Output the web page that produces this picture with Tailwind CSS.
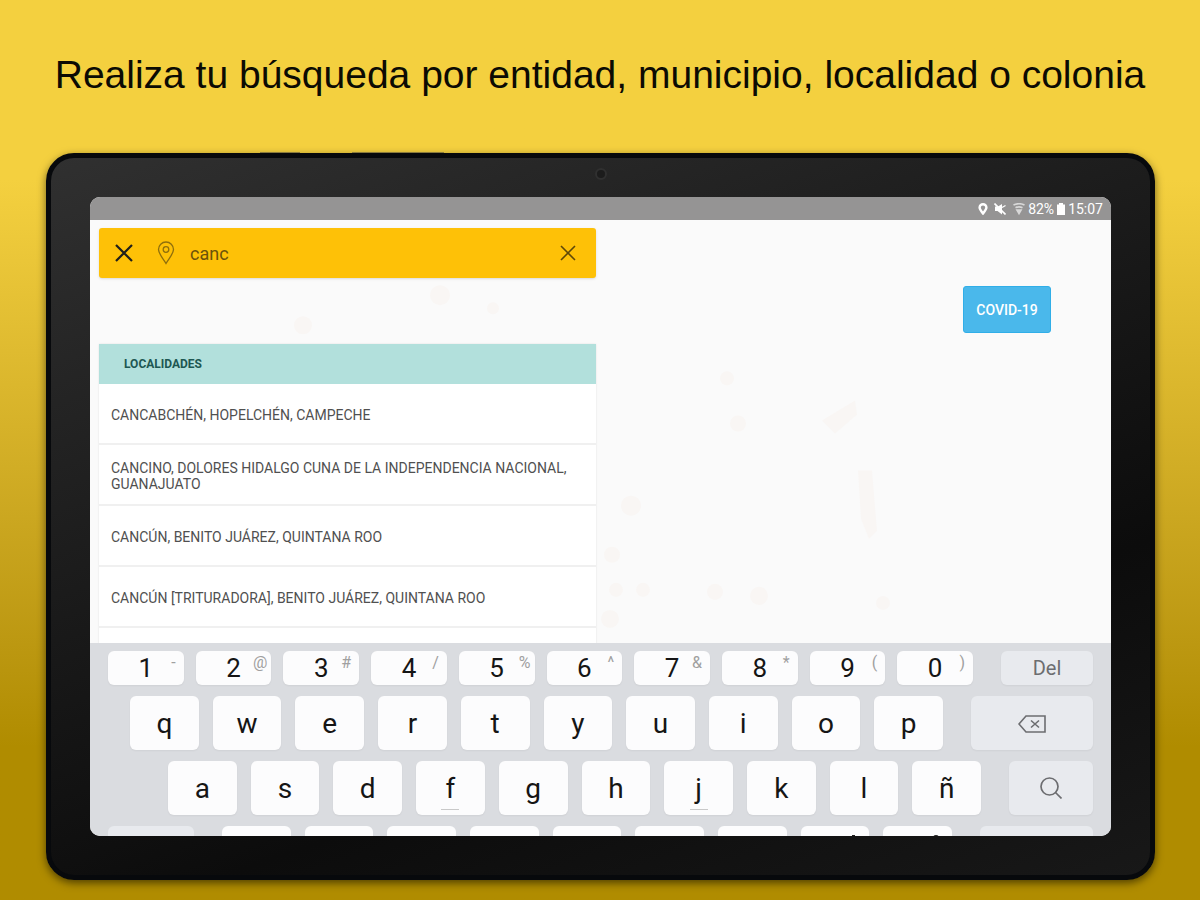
<!DOCTYPE html>
<html lang="es">
<head>
<meta charset="utf-8">
<meta name="viewport" content="width=device-width, initial-scale=1">
<title>Búsqueda</title>
<script src="https://cdn.jsdelivr.net/npm/@tailwindcss/browser@4"></script>
</head>
<body class="font-[Roboto,sans-serif]">
<main class="min-h-screen overflow-hidden bg-linear-to-b from-[#f4d03f] from-20% to-[#b08c00] to-83% px-[46px] pb-5">
  <h1 class="flex h-[153px] items-center justify-center pb-[2px] font-['Liberation_Sans',sans-serif] text-[39px] whitespace-nowrap text-[#0c0b03]">Realiza tu búsqueda por entidad, municipio, localidad o colonia</h1>

  <div class="relative mr-[-1px] rounded-[28px] border-[5px] border-[#07090c] bg-linear-160 from-[#303030] via-[#0c0c0c] via-70% to-[#181818] p-[39px] shadow-[0_3px_8px_rgba(0,0,0,0.55)]">
    <div class="absolute -top-[6px] left-[19%] h-px w-10 bg-[#8a7a3c]"></div>
    <div class="absolute -top-[6px] left-[27.400%] h-px w-[92px] bg-[#8a7a3c]"></div>
    <div class="absolute inset-x-0 top-[10px] mx-auto size-3 rounded-full border-2 border-[#303030] bg-[#1c1c1c]"></div>

    <div class="overflow-hidden rounded-[10px] bg-white">
      <header class="flex h-[23px] items-center justify-end gap-[3px] bg-[#959494] pr-2 text-sm text-white">
        <svg class="h-3 w-3" viewBox="0 0 12 12" fill="none" stroke="currentColor" stroke-width="2.400"><path d="M6 10.500C4 8 2.600 6.400 2.600 4.600a3.400 3.400 0 0 1 6.800 0C9.400 6.400 8 8 6 10.500Z"/></svg>
        <svg class="ml-[2px] h-3 w-3" viewBox="0 0 12 12" fill="currentColor"><path d="M1 3.500h3L8 1v10.500L3.500 8H1Z"/><path d="M.5.500l11 11" stroke="#fff" stroke-width="1.600"/><path d="M8 4.500l3.500-2" stroke="#fff" stroke-width="1.200"/></svg>
        <svg class="ml-1 h-3 w-3" viewBox="0 0 12 12" fill="none" stroke="#d8d8d8" stroke-width="1.700"><path d="M.5 2Q6-.5 11.500 2M2.500 4.800Q6 3 9.500 4.800"/><path d="M4 7h4L6 10.500Z" fill="#d8d8d8"/></svg>
        <span>82%</span>
        <svg class="h-3 w-2" viewBox="0 0 8 12" fill="currentColor"><path d="M0 1.500h2V0h4v1.500h2V12H0Z"/></svg>
        <span>15:07</span>
      </header>

      <div class="relative isolate flex h-[423px] items-start justify-between overflow-hidden bg-[#fafafa] pr-[60px] pl-[9px]">
        <svg class="absolute inset-0 -z-10 h-full w-full" viewBox="0 0 1021 422" preserveAspectRatio="none" fill="#f9f6f4">
          <circle cx="350" cy="75" r="10"/><circle cx="213" cy="105" r="9"/><circle cx="403" cy="88" r="6"/>
          <circle cx="541" cy="285" r="10"/><circle cx="522" cy="334" r="8"/><circle cx="526" cy="369" r="7"/><circle cx="553" cy="369" r="7"/><circle cx="520" cy="398" r="9"/>
          <circle cx="637" cy="158" r="7"/><circle cx="648" cy="203" r="8"/><circle cx="625" cy="371" r="8"/><circle cx="669" cy="375" r="9"/><circle cx="793" cy="382" r="7"/>
          <path d="M732 200l33-20 2 14-22 19ZM768 250h14l5 60-8 8-8-20Z"/>
        </svg>
        <section class="w-1/2 min-w-0 pt-2 lg:w-[52.200%]">
          <form class="flex h-[50px] items-center rounded-[3px] bg-[#fec107] px-4 text-[#3b2f0a] shadow-sm">
            <button type="button" aria-label="Cerrar" class="shrink-0 text-[#20201c]"><svg class="size-[18px]" viewBox="0 0 18 18" fill="none" stroke="currentColor" stroke-width="2.200"><path d="M1 1l16 16M17 1L1 17"/></svg></button>
            <svg class="ml-6 h-6 w-[18px] shrink-0" viewBox="0 0 18 24" fill="none" stroke="#8f6f0c" stroke-width="1.300"><path d="M9 22.500C6 17 1.500 13 1.500 8.500a7.500 7.500 0 0 1 15 0C16.500 13 12 17 9 22.500Z"/><circle cx="9" cy="8.500" r="2.800"/></svg>
            <input aria-label="Buscar" value="canc" class="ml-[15px] min-w-0 flex-1 bg-transparent pt-[2px] text-lg text-[#6b520b] outline-none">
            <button type="button" aria-label="Borrar" class="mr-1 shrink-0 text-[#5e4809]"><svg class="size-4" viewBox="0 0 16 16" fill="none" stroke="currentColor" stroke-width="1.600"><path d="M1 1l14 14M15 1L1 15"/></svg></button>
          </form>

          <div class="mt-[66px] bg-white shadow-[0_0_2px_rgba(0,0,0,0.1)]">
            <h2 class="flex h-10 items-center bg-[#b2e0dc] px-[25px] text-xs font-bold text-[#1d5752]">LOCALIDADES</h2>
            <ul class="text-sm leading-4 text-[#505050]">
              <li class="flex h-[61px] items-center border-b-2 border-[#f0f0f0] px-3 pt-[2px]">CANCABCHÉN, HOPELCHÉN, CAMPECHE</li>
              <li class="flex h-[61px] items-center border-b-2 border-[#f0f0f0] px-3 pt-[2px]">CANCINO, DOLORES HIDALGO CUNA DE LA INDEPENDENCIA NACIONAL, GUANAJUATO</li>
              <li class="flex h-[61px] items-center border-b-2 border-[#f0f0f0] px-3 pt-[2px]">CANCÚN, BENITO JUÁREZ, QUINTANA ROO</li>
              <li class="flex h-[61px] items-center border-b-2 border-[#f0f0f0] px-3 pt-[2px]">CANCÚN [TRITURADORA], BENITO JUÁREZ, QUINTANA ROO</li>
              <li class="h-[61px]"></li>
            </ul>
          </div>
        </section>
        <button type="button" class="mt-[66px] h-[47px] w-[88px] rounded-[3px] border border-[#30aee8] bg-[#4ab8eb] text-sm font-medium text-white">COVID-19</button>
      </div>

      <section aria-label="Teclado" class="h-[193px] space-y-[11px] overflow-hidden bg-[#dadce0] px-[18px] pt-2 text-[28px] leading-none text-[#151515]">
        <div class="flex h-[34px] gap-3">
          <button type="button" class="relative min-w-0 flex-1 rounded-md bg-[#fcfcfd] text-[26px] shadow-xs">1<span class="absolute top-1 right-2 text-base leading-none text-[#a0a0a0]">-</span></button>
          <button type="button" class="relative min-w-0 flex-1 rounded-md bg-[#fcfcfd] text-[26px] shadow-xs">2<span class="absolute top-1 right-1 text-base leading-none text-[#a0a0a0]">@</span></button>
          <button type="button" class="relative min-w-0 flex-1 rounded-md bg-[#fcfcfd] text-[26px] shadow-xs">3<span class="absolute top-1 right-2 text-base leading-none text-[#a0a0a0]">#</span></button>
          <button type="button" class="relative min-w-0 flex-1 rounded-md bg-[#fcfcfd] text-[26px] shadow-xs">4<span class="absolute top-1 right-2 text-base leading-none text-[#a0a0a0]">/</span></button>
          <button type="button" class="relative min-w-0 flex-1 rounded-md bg-[#fcfcfd] text-[26px] shadow-xs">5<span class="absolute top-1 right-1 text-base leading-none text-[#a0a0a0]">%</span></button>
          <button type="button" class="relative min-w-0 flex-1 rounded-md bg-[#fcfcfd] text-[26px] shadow-xs">6<span class="absolute top-1 right-2 text-base leading-none text-[#a0a0a0]">^</span></button>
          <button type="button" class="relative min-w-0 flex-1 rounded-md bg-[#fcfcfd] text-[26px] shadow-xs">7<span class="absolute top-1 right-2 text-base leading-none text-[#a0a0a0]">&amp;</span></button>
          <button type="button" class="relative min-w-0 flex-1 rounded-md bg-[#fcfcfd] text-[26px] shadow-xs">8<span class="absolute top-1 right-2 text-base leading-none text-[#a0a0a0]">*</span></button>
          <button type="button" class="relative min-w-0 flex-1 rounded-md bg-[#fcfcfd] text-[26px] shadow-xs">9<span class="absolute top-1 right-2 text-base leading-none text-[#a0a0a0]">(</span></button>
          <button type="button" class="relative min-w-0 flex-1 rounded-md bg-[#fcfcfd] text-[26px] shadow-xs">0<span class="absolute top-1 right-2 text-base leading-none text-[#a0a0a0]">)</span></button>
          <button type="button" class="ml-4 w-[92px] shrink-0 rounded-md bg-[#e8eaee] text-xl text-[#6c6d70] shadow-xs">Del</button>
        </div>
        <div class="flex h-[54px] gap-[14px] pl-[22px]">
          <button type="button" class="min-w-0 flex-1 rounded-md bg-[#fcfcfd] pt-[2px] shadow-xs">q</button>
          <button type="button" class="min-w-0 flex-1 rounded-md bg-[#fcfcfd] pt-[2px] shadow-xs">w</button>
          <button type="button" class="min-w-0 flex-1 rounded-md bg-[#fcfcfd] pt-[2px] shadow-xs">e</button>
          <button type="button" class="min-w-0 flex-1 rounded-md bg-[#fcfcfd] pt-[2px] shadow-xs">r</button>
          <button type="button" class="min-w-0 flex-1 rounded-md bg-[#fcfcfd] pt-[2px] shadow-xs">t</button>
          <button type="button" class="min-w-0 flex-1 rounded-md bg-[#fcfcfd] pt-[2px] shadow-xs">y</button>
          <button type="button" class="min-w-0 flex-1 rounded-md bg-[#fcfcfd] pt-[2px] shadow-xs">u</button>
          <button type="button" class="min-w-0 flex-1 rounded-md bg-[#fcfcfd] pt-[2px] shadow-xs">i</button>
          <button type="button" class="min-w-0 flex-1 rounded-md bg-[#fcfcfd] pt-[2px] shadow-xs">o</button>
          <button type="button" class="min-w-0 flex-1 rounded-md bg-[#fcfcfd] pt-[2px] shadow-xs">p</button>
          <button type="button" aria-label="Retroceso" class="ml-[14px] flex w-[122px] shrink-0 items-center justify-center rounded-md bg-[#e8eaee] pt-[2px] text-[#6c6d70] shadow-xs"><svg class="h-[18px] w-7" viewBox="0 0 28 18" fill="none" stroke="currentColor" stroke-width="1.600"><path d="M1 9L8 1h19v16H8ZM13 5.500l8 7M21 5.500l-8 7"/></svg></button>
        </div>
        <div class="flex h-[54px] gap-[14px] pl-[60px]">
          <button type="button" class="min-w-0 flex-1 rounded-md bg-[#fcfcfd] pt-[2px] shadow-xs">a</button>
          <button type="button" class="min-w-0 flex-1 rounded-md bg-[#fcfcfd] pt-[2px] shadow-xs">s</button>
          <button type="button" class="min-w-0 flex-1 rounded-md bg-[#fcfcfd] pt-[2px] shadow-xs">d</button>
          <button type="button" class="relative min-w-0 flex-1 rounded-md bg-[#fcfcfd] pt-[2px] shadow-xs">f<span class="absolute inset-x-0 bottom-[5px] mx-auto h-px w-[18px] bg-[#c9c9c9]"></span></button>
          <button type="button" class="min-w-0 flex-1 rounded-md bg-[#fcfcfd] pt-[2px] shadow-xs">g</button>
          <button type="button" class="min-w-0 flex-1 rounded-md bg-[#fcfcfd] pt-[2px] shadow-xs">h</button>
          <button type="button" class="relative min-w-0 flex-1 rounded-md bg-[#fcfcfd] pt-[2px] shadow-xs">j<span class="absolute inset-x-0 bottom-[5px] mx-auto h-px w-[18px] bg-[#c9c9c9]"></span></button>
          <button type="button" class="min-w-0 flex-1 rounded-md bg-[#fcfcfd] pt-[2px] shadow-xs">k</button>
          <button type="button" class="min-w-0 flex-1 rounded-md bg-[#fcfcfd] pt-[2px] shadow-xs">l</button>
          <button type="button" class="min-w-0 flex-1 rounded-md bg-[#fcfcfd] pt-[2px] shadow-xs">ñ</button>
          <button type="button" aria-label="Buscar" class="ml-[14px] flex w-[84px] shrink-0 items-center justify-center rounded-md bg-[#e8eaee] text-[#6c6d70] shadow-xs"><svg class="size-[22px]" viewBox="0 0 22 22" fill="none" stroke="currentColor" stroke-width="1.700"><circle cx="9.500" cy="9.500" r="8.500"/><path d="M15.500 15.500l6 6"/></svg></button>
        </div>
        <div class="flex h-[54px] gap-[14px]">
          <button type="button" aria-label="Mayúsculas" class="mr-[14px] w-[86px] shrink-0 rounded-md bg-[#e8eaee]"></button>
          <button type="button" aria-label="z" class="min-w-0 flex-1 rounded-md bg-[#fcfcfd]"></button>
          <button type="button" aria-label="x" class="min-w-0 flex-1 rounded-md bg-[#fcfcfd]"></button>
          <button type="button" aria-label="c" class="min-w-0 flex-1 rounded-md bg-[#fcfcfd]"></button>
          <button type="button" aria-label="v" class="min-w-0 flex-1 rounded-md bg-[#fcfcfd]"></button>
          <button type="button" aria-label="b" class="min-w-0 flex-1 rounded-md bg-[#fcfcfd]"></button>
          <button type="button" aria-label="n" class="min-w-0 flex-1 rounded-md bg-[#fcfcfd]"></button>
          <button type="button" aria-label="m" class="min-w-0 flex-1 rounded-md bg-[#fcfcfd]"></button>
          <button type="button" aria-label="Coma" class="flex min-w-0 flex-1 items-start justify-center rounded-md bg-[#fcfcfd] pt-[9px]"><span class="ml-9 h-4 w-[3px] bg-[#222222]"></span></button>
          <button type="button" aria-label="Punto" class="flex min-w-0 flex-1 items-start justify-center rounded-md bg-[#fcfcfd] pt-[9px]"><span class="ml-9 h-4 w-[6px] rounded-t-sm bg-[#222222]"></span></button>
          <button type="button" aria-label="Mayúsculas derecha" class="ml-[14px] w-[113px] shrink-0 rounded-md bg-[#e8eaee]"></button>
        </div>
      </section>
    </div>
  </div>
</main>
</body>
</html>
